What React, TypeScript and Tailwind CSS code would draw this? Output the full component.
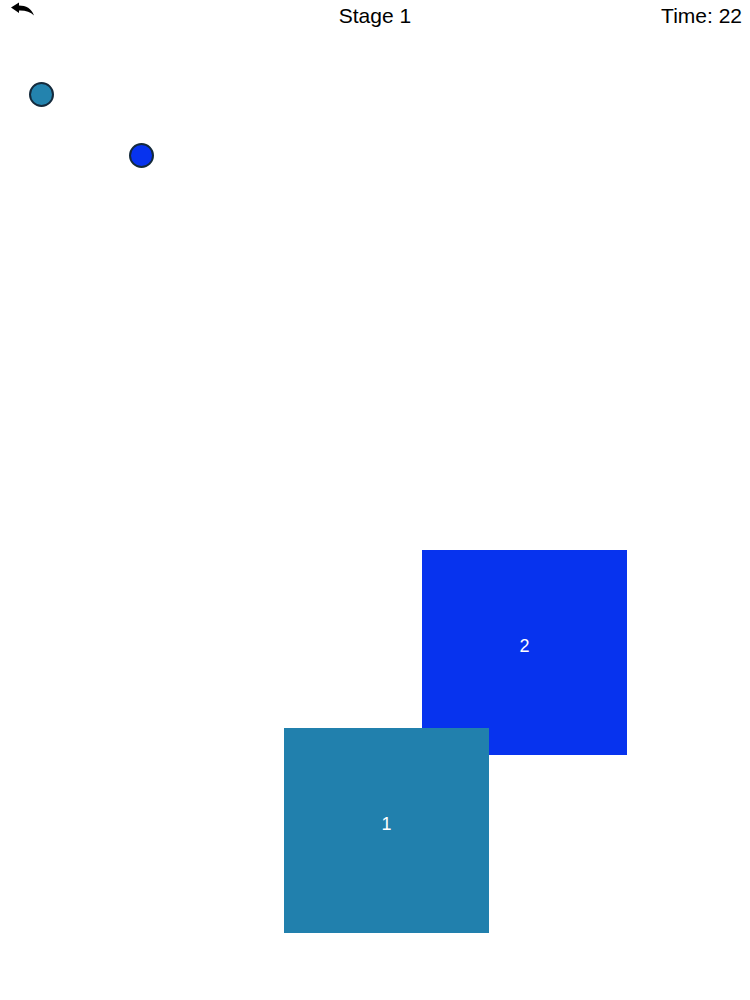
function BackArrow() {
  return (
    <svg width="24" height="16" viewBox="0 0 24 16" className="block">
      <path d="M0 5.5 L8 0.5 L8 3.6 C15 3.6 20.5 6.5 23 13.5 C19.5 9.8 14.5 8.2 8 8.4 L8 11 Z" fill="#000" />
    </svg>
  )
}

const dots = [
  { left: 29, top: 82, color: 'bg-[#2383ae]' },
  { left: 129, top: 143, color: 'bg-[#0733ee]' },
]

export default function App() {
  return (
    <div className="relative h-[1000px] w-[750px] overflow-hidden bg-white font-['Liberation_Sans',sans-serif] text-black">
      <div className="grid h-8 grid-cols-3 items-center px-2">
        <button className="justify-self-start -mt-3 ml-[3px]">
          <BackArrow />
        </button>
        <div className="justify-self-center -mt-0.5 text-[21px] leading-none">Stage 1</div>
        <div className="justify-self-end -mt-0.5 text-[21px] leading-none">Time: 22</div>
      </div>

      {dots.map((d, i) => (
        <div
          key={i}
          className={`absolute h-[25px] w-[25px] rounded-full border-2 border-[#142a3c] ${d.color}`}
          style={{ left: d.left, top: d.top }}
        />
      ))}

      <div className="absolute left-[422px] top-[550px] flex h-[205px] w-[205px] items-center justify-center bg-[#0733ee] pb-3.5 text-lg text-white">
        2
      </div>
      <div className="absolute left-[284px] top-[728px] flex h-[205px] w-[205px] items-center justify-center bg-[#2180ad] pb-3.5 text-lg text-white">
        1
      </div>
    </div>
  )
}
